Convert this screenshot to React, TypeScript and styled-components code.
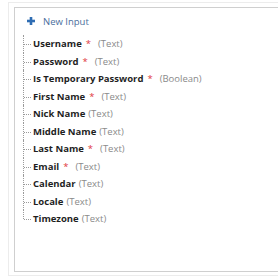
import React from "react";
import styled, { createGlobalStyle } from "styled-components";

const GlobalStyle = createGlobalStyle`
  html, body {
    margin: 0;
    padding: 0;
    background: #fff;
    overflow: hidden;
  }
  body {
    font-family: "Open Sans", "Noto Sans", sans-serif;
  }
`;

interface Field {
  name: string;
  type: string;
  required?: boolean;
}

const fields: Field[] = [
  { name: "Username", type: "Text", required: true },
  { name: "Password", type: "Text", required: true },
  { name: "Is Temporary Password", type: "Boolean", required: true },
  { name: "First Name", type: "Text", required: true },
  { name: "Nick Name", type: "Text" },
  { name: "Middle Name", type: "Text" },
  { name: "Last Name", type: "Text", required: true },
  { name: "Email", type: "Text", required: true },
  { name: "Calendar", type: "Text" },
  { name: "Locale", type: "Text" },
  { name: "Timezone", type: "Text" },
];

const PlusIcon = () => (
  <svg width="8" height="8" viewBox="0 0 8 8">
    <rect x="2.7" y="0" width="2.6" height="8" fill="#2f6db3" />
    <rect x="0" y="2.7" width="8" height="2.6" fill="#2f6db3" />
  </svg>
);

export default function App() {
  return (
    <>
      <GlobalStyle />
      <Outer>
        <Panel>
          <AddButton>
            <PlusIcon />
            <span>New Input</span>
          </AddButton>
          <Tree>
            {fields.map((f, i) => (
              <Item key={f.name} $last={i === fields.length - 1}>
                <Name>{f.name}</Name>
                {f.required && <Star>*</Star>}
                <Type $gap={!!f.required}>({f.type})</Type>
              </Item>
            ))}
          </Tree>
        </Panel>
      </Outer>
    </>
  );
}

const Outer = styled.div`
  margin: 2px 0 0 8px;
  width: 270px;
  height: 274px;
  border: 1px solid #ececec;
  border-right: none;
  padding: 4px 0 3px 5px;
  box-sizing: border-box;
`;

const Panel = styled.div`
  border: 1px solid #cfcfcf;
  border-right: none;
  height: 100%;
  box-sizing: border-box;
  padding: 7px 0 0 8px;
`;

const AddButton = styled.div`
  display: flex;
  align-items: center;
  gap: 8px;
  font-size: 9.5px;
  color: #4a6d9c;
  height: 12px;
  margin-left: 4px;
`;

const Tree = styled.ul`
  list-style: none;
  margin: 8px 0 0 0;
  padding: 0;
`;

const Item = styled.li<{ $last: boolean }>`
  position: relative;
  padding-left: 10px;
  height: 17.5px;
  line-height: 17.5px;
  font-size: 9.5px;
  white-space: nowrap;

  &::before {
    content: "";
    position: absolute;
    left: 0;
    top: 0;
    height: ${({ $last }) => ($last ? "9px" : "100%")};
    border-left: 1px dotted #9a9a9a;
  }

  &::after {
    content: "";
    position: absolute;
    left: 1px;
    top: 9px;
    width: 7px;
    border-top: 1px dotted #9a9a9a;
  }
`;

const Name = styled.span`
  font-weight: 700;
  color: #1f1f1f;
`;

const Star = styled.span`
  color: #e0363c;
  margin-left: 4px;
`;

const Type = styled.span<{ $gap: boolean }>`
  color: #8a8a8a;
  margin-left: ${({ $gap }) => ($gap ? "7px" : "3px")};
`;
